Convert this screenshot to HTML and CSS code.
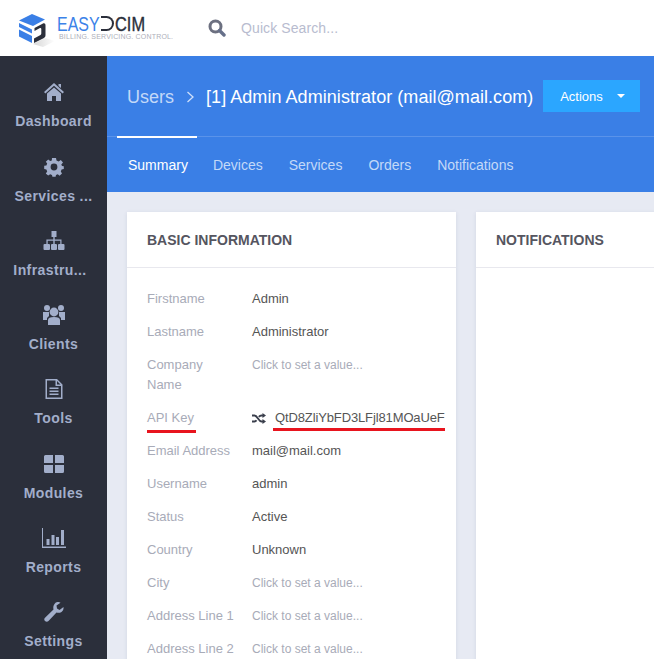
FILE: index.html
```html
<!DOCTYPE html>
<html lang="en">
<head>
<meta charset="utf-8">
<title>EasyDCIM</title>
<link rel="stylesheet" href="styles.css">
</head>
<body>
<header class="topbar">
  <div class="logo">
    <svg class="logo-mark" width="36" height="34" viewBox="0 0 36 34">
      <defs><linearGradient id="sh" x1="0" x2="1" y1="0" y2="0"><stop offset="0" stop-color="#b5b5b5"/><stop offset="1" stop-color="#fff"/></linearGradient></defs>
      <path d="M14 30 L26 24 L36 27 L24 33 Z" fill="url(#sh)" opacity=".55"/>
      <path d="M0 6.500 L13 0 L26 5.500 L14 12 Z" fill="#3a7fe6"/>
      <path d="M0 9 L13 15.500 V19.500 L0 13 Z M0 15.500 L13 22 V29 L0 22.500 Z" fill="#3a7fe6"/>
      <path d="M15.500 14 L24 9.500 C25.800 9 26.500 10 26.500 11.500 V21 C26.500 22.500 26 23.500 24.500 24.200 L15 29 V24.500 L21.500 21 C22 20.500 22.300 20 22.300 19.500 V15 C22.300 14 21.500 13.800 20.500 14.300 L15.500 17 Z" fill="#2b2f3b"/>
    </svg>
    <div class="logo-text">
      <div class="logo-name"><span class="logo-easy">EASY</span><span class="logo-d"></span><span class="logo-dcim">CIM</span></div>
      <div class="logo-tag">BILLING. SERVICING. CONTROL.</div>
    </div>
  </div>
  <div class="search">
    <svg width="18" height="18" viewBox="0 0 18 18"><circle cx="7.500" cy="7.500" r="5.500" fill="none" stroke="#6c7080" stroke-width="3"/><path d="M11.500 11.500 L16 16" stroke="#66708a" stroke-width="3.400" stroke-linecap="round"/></svg>
    <span class="search-text">Quick Search...</span>
  </div>
</header>
<div class="shell">
  <nav class="sidebar">
    <a class="nav-item">
      <svg class="nav-icon" width="22" height="20" viewBox="0 0 22 20"><path d="M11 1 L21 10 L19.600 11.400 L11 3.800 L2.400 11.400 L1 10 Z M15.500 2 H18 V6 L15.500 4 Z M4 11.500 L11 5.500 L18 11.500 V19 H13 V14 H9 V19 H4 Z"/></svg>
      <span class="nav-label">Dashboard</span>
    </a>
    <a class="nav-item">
      <svg class="nav-icon" width="20" height="20" viewBox="0 0 20 20"><path fill-rule="evenodd" d="M8 1 H12 L12.500 3.600 L14.600 4.500 L16.800 3 L19 5.600 L17.300 7.600 L18 9 L19.800 9.300 V12 L17.600 12.600 L16.800 14.600 L18 16.600 L15.600 18.800 L13.700 17.300 L12 18 L11.600 19.800 H8.400 L8 17.900 L6.200 17.200 L4.200 18.600 L1.800 16.400 L3.200 14.400 L2.400 12.600 L.2 12 V8.800 L2.400 8.400 L3.200 6.600 L1.800 4.800 L4.200 2.600 L6.200 4 L7.800 3.400 Z M10 6.600 A3.400 3.400 0 1 0 10 13.400 A3.400 3.400 0 1 0 10 6.600 Z"/></svg>
      <span class="nav-label">Services ...</span>
    </a>
    <a class="nav-item">
      <svg class="nav-icon" width="22" height="20" viewBox="0 0 22 20"><path d="M8.500 0 H13.500 V6 H11.700 V8.500 H18.500 V13 H20.500 A1 1 0 0 1 21.500 14 V18 A1 1 0 0 1 20.500 19 H16 A1 1 0 0 1 15 18 V14 A1 1 0 0 1 16 13 H17.300 V9.800 H11.700 V13 H13 A1 1 0 0 1 14 14 V18 A1 1 0 0 1 13 19 H9 A1 1 0 0 1 8 18 V14 A1 1 0 0 1 9 13 H10.300 V9.800 H4.700 V13 H6 A1 1 0 0 1 7 14 V18 A1 1 0 0 1 6 19 H1.500 A1 1 0 0 1 .5 18 V14 A1 1 0 0 1 1.500 13 H3.400 V8.500 H10.300 V6 H8.500 Z"/></svg>
      <span class="nav-label nav-label-long">Infrastru...</span>
    </a>
    <a class="nav-item">
      <svg class="nav-icon" width="24" height="22" viewBox="0 0 24 22"><circle cx="5" cy="4" r="3"/><circle cx="19" cy="4" r="3"/><circle cx="12" cy="8" r="4.400"/><path d="M1 8 H7 L7 12 L5 14 V16 H1 Z M23 8 H17 L17 12 L19 14 V16 H23 Z M6 21 V16 C6 14 8 13 12 13 C16 13 18 14 18 16 V21 Z"/></svg>
      <span class="nav-label">Clients</span>
    </a>
    <a class="nav-item">
      <svg class="nav-icon" width="18" height="22" viewBox="0 0 18 22"><path fill-rule="evenodd" d="M.5 1 H12 L17.500 6.500 V21 H.5 Z M2 2.500 V19.500 H16 V8 H10.500 V2.500 Z M12 3 V6.500 H15.500 Z M4.500 9.500 H13.500 V11 H4.500 Z M4.500 12.500 H13.500 V14 H4.500 Z M4.500 15.500 H13.500 V17 H4.500 Z"/></svg>
      <span class="nav-label">Tools</span>
    </a>
    <a class="nav-item">
      <svg class="nav-icon" width="20" height="18" viewBox="0 0 20 18"><path d="M1.500 0 H9 V8 H0 V1.500 A1.500 1.500 0 0 1 1.500 0 Z M11 0 H18.500 A1.500 1.500 0 0 1 20 1.500 V8 H11 Z M0 10 H9 V18 H1.500 A1.500 1.500 0 0 1 0 16.500 Z M11 10 H20 V16.500 A1.500 1.500 0 0 1 18.500 18 H11 Z"/></svg>
      <span class="nav-label">Modules</span>
    </a>
    <a class="nav-item">
      <svg class="nav-icon" width="24" height="20" viewBox="0 0 24 20"><path d="M0 0 H1 V18.500 H24 V20 H0 Z M4.500 11 H7.500 V17 H4.500 Z M9.500 7 H12.500 V17 H9.500 Z M14 9 H17 V17 H14 Z M19 2 H22 V17 H19 Z"/></svg>
      <span class="nav-label">Reports</span>
    </a>
    <a class="nav-item">
      <svg class="nav-icon" width="20" height="20" viewBox="0 0 20 20"><path d="M13.500 0 C15 0 16 .3 16.500 .8 L12.500 3.500 L13 6.500 L15.500 8 L19.500 5 C19.800 7 19 9 17.500 10 C15.800 11 14 11 12.500 10.500 L4.500 19 C3.500 20 2 20 1 19 C0 18 0 16.800 1 15.800 L9.500 7.500 C9 5.500 9.300 3.500 10.500 2 C11.300 .8 12.300 .2 13.500 0 Z"/></svg>
      <span class="nav-label">Settings</span>
    </a>
  </nav>
  <main class="main">
    <section class="page-head">
      <div class="title-row">
        <h1 class="crumbs">
          <span class="crumb-root">Users</span>
          <svg class="crumb-sep" width="9" height="14" viewBox="0 0 9 14"><path d="M1.500 2 L7 7 L1.500 12" fill="none" stroke="#cfe0fa" stroke-width="1.300"/></svg>
          <span class="crumb-current">[1] Admin Administrator (mail@mail.com)</span>
        </h1>
        <button class="actions">Actions<span class="caret"></span></button>
      </div>
      <div class="tabs">
        <a class="tab tab-active">Summary</a>
        <a class="tab">Devices</a>
        <a class="tab">Services</a>
        <a class="tab">Orders</a>
        <a class="tab">Notifications</a>
      </div>
    </section>
    <section class="content">
      <article class="card card-info">
        <h2 class="card-title">BASIC INFORMATION</h2>
        <dl class="fields">
          <dt>Firstname</dt><dd>Admin</dd>
          <dt>Lastname</dt><dd>Administrator</dd>
          <dt>Company Name</dt><dd class="empty">Click to set a value...</dd>
          <dt><span class="mark mark-label">API Key</span></dt>
          <dd class="api"><svg width="14" height="11" viewBox="0 0 14 11"><path d="M0 2.500 H2.500 C5.500 2.500 6.500 8.500 9.500 8.500 H11" fill="none" stroke-width="1.900"/><path d="M0 8.500 H2.500 C3.300 8.500 4 8 4.500 7.300 M6.800 3.800 C7.500 3 8.300 2.500 9.500 2.500 H11" fill="none" stroke-width="1.900"/><path d="M10.500 0 L14 2.500 L10.500 5 Z M10.500 6 L14 8.500 L10.500 11 Z" stroke="none"/></svg><span class="mark mark-key">QtD8ZliYbFD3LFjl81MOaUeF</span></dd>
          <dt>Email Address</dt><dd>mail@mail.com</dd>
          <dt>Username</dt><dd>admin</dd>
          <dt>Status</dt><dd>Active</dd>
          <dt>Country</dt><dd>Unknown</dd>
          <dt>City</dt><dd class="empty">Click to set a value...</dd>
          <dt>Address Line 1</dt><dd class="empty">Click to set a value...</dd>
          <dt>Address Line 2</dt><dd class="empty">Click to set a value...</dd>
        </dl>
      </article>
      <article class="card card-notes">
        <h2 class="card-title">NOTIFICATIONS</h2>
      </article>
    </section>
  </main>
</div>
</body>
</html>
```
FILE: styles.css
```css
* { box-sizing: border-box; }
html, body { margin: 0; height: 659px; overflow: hidden; background: #fff; }
body { font-family: "Liberation Sans", Arial, sans-serif; color: #555; }

.topbar { height: 56px; display: flex; align-items: center; background: #fff; }
.logo { width: 208px; padding-left: 19px; display: flex; align-items: flex-start; height: 56px; }
.logo-mark { margin-top: 14px; overflow: visible; flex: none; }
.logo-text { margin: 15px 0 0 2px; }
.logo-name { display: flex; align-items: center; height: 17px; font: 400 21px/17px "Liberation Sans", sans-serif; white-space: nowrap; }
.logo-easy { color: #3b82e8; display: inline-block; width: 43px; transform: scaleX(.76); transform-origin: left center; }
.logo-d { width: 13px; height: 15px; margin-left: 1px; border: 2.500px solid #2b2f3b; border-left: 0; border-radius: 0 8px 8px 0; flex: none; }
.logo-dcim { color: #2b2f3b; display: inline-block; margin-left: 1px; transform: scaleX(.78); transform-origin: left center; -webkit-text-stroke: .4px #2b2f3b; }
.logo-tag { margin: 0 0 0 2px; font: 400 7px/9px "Liberation Sans", sans-serif; letter-spacing: .18px; color: #aeafba; white-space: nowrap; }
.search { display: flex; align-items: center; gap: 15px; }
.search-text { font-size: 14px; letter-spacing: .1px; color: #b8bccf; }

.shell { display: flex; height: 603px; }
.sidebar { width: 107px; flex: none; background: #2b2f3b; overflow: hidden; padding-top: 25.300px; }
.nav-item { height: 74.300px; display: flex; flex-direction: column; align-items: center; }
.nav-icon { height: 22px; fill: #a2aeca; overflow: visible; }
.nav-label { margin-top: 8px; font: 700 14px/20px "Liberation Sans", sans-serif; letter-spacing: .4px; color: #a2aeca; white-space: nowrap; }
.nav-label-long { padding-right: 7px; }

.main { flex: 1; min-width: 0; background: #e7eaf3; overflow: hidden; }
.page-head { height: 136px; background: #3a7fe6; }
.title-row { height: 81px; padding: 24px 14px 0 20px; display: flex; justify-content: space-between; align-items: flex-start; border-bottom: 1px solid #5a93ea; }
.crumbs { margin: 1px 0 0; display: flex; align-items: center; height: 32px; font-size: 18px; font-weight: 400; white-space: nowrap; }
.crumb-root { color: #c3d9f8; }
.crumb-sep { margin: 0 11px 0 12px; }
.crumb-current { color: #fff; letter-spacing: .05px; }
.actions { width: 97px; height: 32px; border: 0; padding: 0 0 0 2px; background: #2ba6ff; color: #fff; font: 400 13px "Liberation Sans", sans-serif; display: flex; align-items: center; justify-content: center; gap: 14px; }
.caret { width: 0; height: 0; border-left: 4px solid transparent; border-right: 4px solid transparent; border-top: 4px solid #fff; }
.tabs { display: flex; margin-top: -1px; padding-left: 10px; }
.tab { padding: 13px 9px 0 11px; margin-right: 6px; height: 55px; font-size: 14px; line-height: 28px; color: #c3d9f8; border-top: 2px solid transparent; white-space: nowrap; }
.tab-active { margin-right: 5px; color: #fff; border-top-color: #fff; }

.content { display: flex; gap: 20px; padding: 20px 0 0 20px; }
.card { background: #fff; box-shadow: 0 1px 4px rgba(60,70,110,.12); flex: none; height: 500px; }
.card-info { width: 329px; }
.card-notes { width: 300px; }
.card-title { margin: 0; height: 56px; padding: 0 20px; border-bottom: 1px solid #e8e8ee; font-size: 14px; font-weight: 700; line-height: 56px; color: #555560; }
.fields { margin: 0; padding: 21px 0 0 20px; display: grid; grid-template-columns: 105px 1fr; font-size: 13px; line-height: 20px; }
.fields dt { color: #a8abb8; padding: 0 13px 13px 0; }
.fields dd { margin: 0; color: #555; padding-bottom: 13px; }
.fields .empty { color: #a8abb8; font-size: 12px; }
.fields .api { display: flex; align-items: flex-start; gap: 7px; }
.api svg { margin-top: 5px; fill: #3a3f4c; stroke: #3a3f4c; flex: none; }
.mark { position: relative; display: inline-block; }
.mark::after { content: ""; position: absolute; left: 0; right: 0; height: 3px; background: #e8141e; }
.mark-label { padding-right: 2px; }
.mark-label::after { bottom: -5px; }
.mark-key { padding-left: 2px; color: #555; white-space: nowrap; letter-spacing: -.125px; }
.mark-key::after { bottom: -3px; }
```
